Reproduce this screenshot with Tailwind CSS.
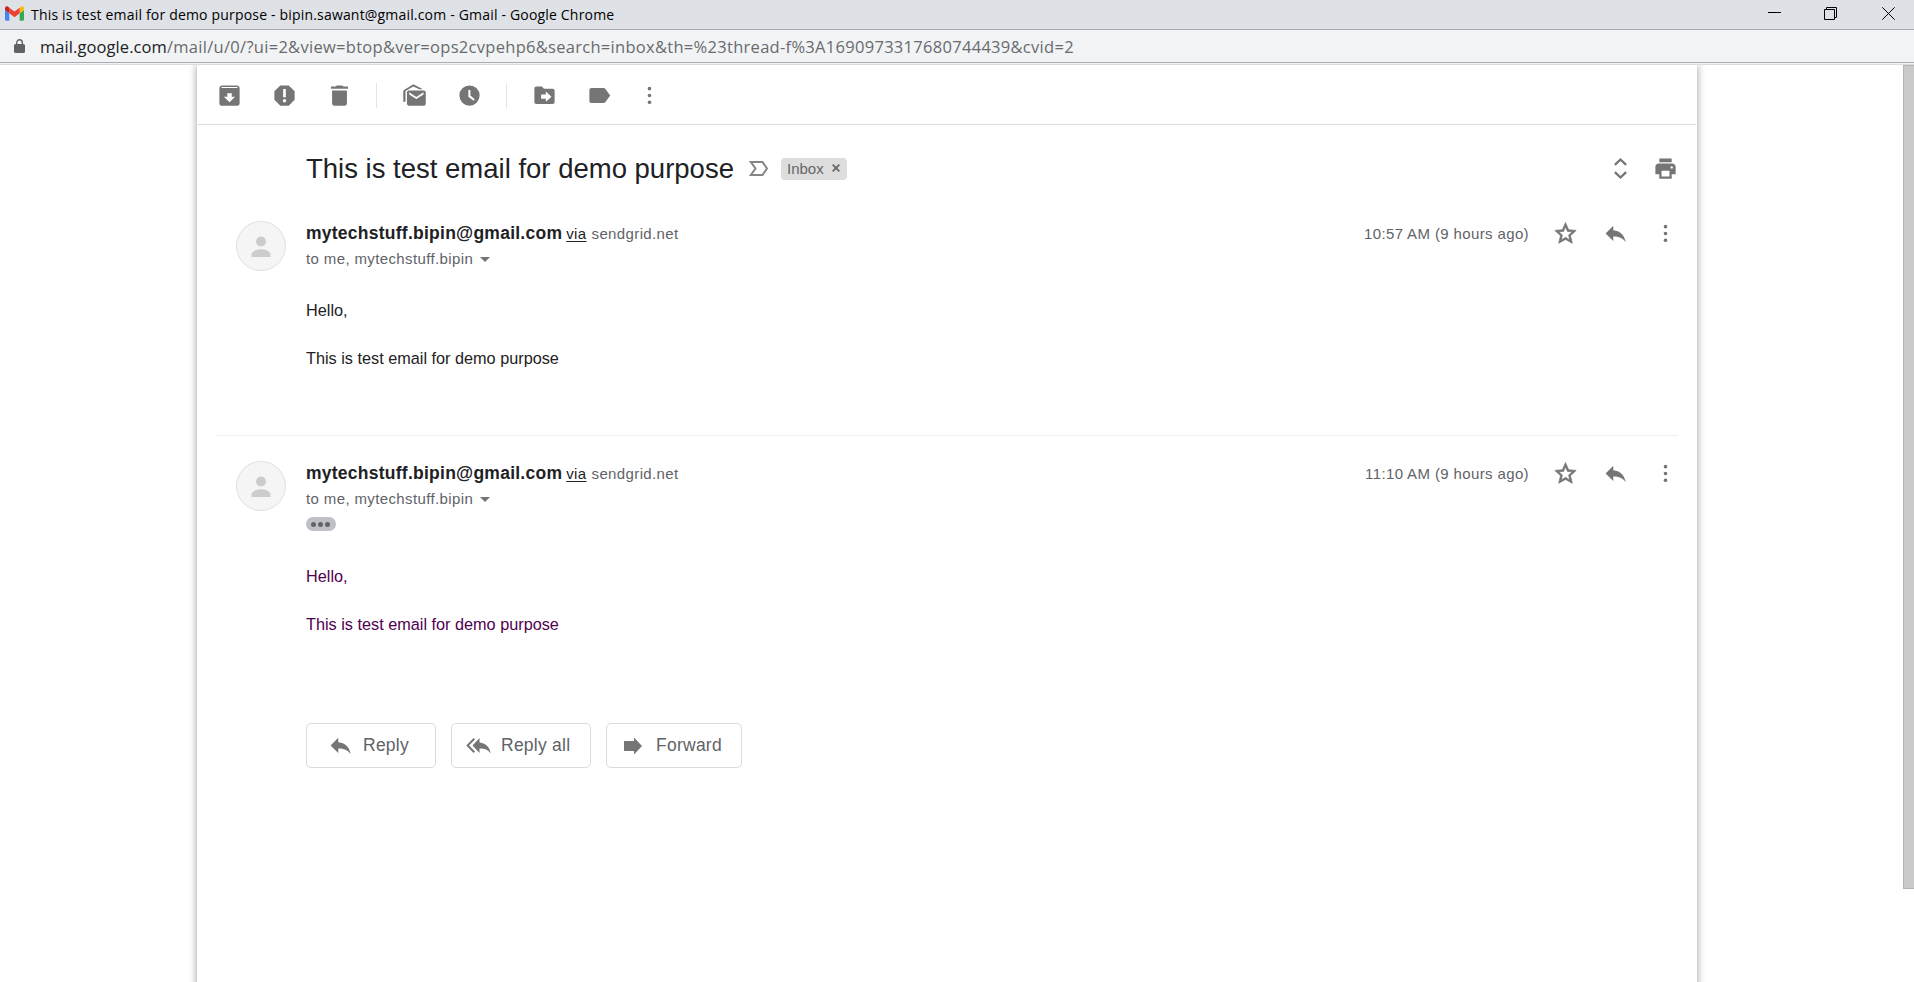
<!DOCTYPE html>
<html lang="en">
<head>
<meta charset="utf-8">
<title>This is test email for demo purpose - Gmail</title>
<script src="https://cdn.jsdelivr.net/npm/@tailwindcss/browser@4"></script>
</head>
<body class="h-[982px] w-[1914px] overflow-hidden bg-white flex flex-col font-['Liberation_Sans',Arial,sans-serif] text-[#202124]">

<svg class="hidden" aria-hidden="true">
  <symbol id="reply" viewBox="0 0 24 24"><path d="M10 9.200V5.200L3.200 12l6.800 6.600v-4c5 0 8.500 1.400 11 4.900-1-5-4-9.800-11-10.300z"/></symbol>
  <symbol id="more" viewBox="0 0 24 24"><circle cx="12" cy="5.900" r="1.600"/><circle cx="12" cy="12" r="1.600"/><circle cx="12" cy="18.100" r="1.600"/></symbol>
  <symbol id="star" viewBox="0 0 24 24"><path stroke="currentColor" stroke-width=".6" d="M21.500 9.240l-6.690-.62L12 2.300 9.190 8.630 2.500 9.240l5.060 4.730L5.920 20.700 12 17.270 18.080 20.700l-1.630-6.730L21.500 9.240zM12 15.400l-3.760 2.270 1-4.280-3.320-2.880 4.380-.38L12 6.100l1.710 4.040 4.380.38-3.320 2.880 1 4.280L12 15.400z"/></symbol>
  <symbol id="person" viewBox="0 0 50 50"><circle cx="25" cy="20.500" r="5"/><path d="M15.500 36v-2.500c0-3.500 6-5.200 9.500-5.200s9.500 1.700 9.500 5.200V36z"/></symbol>
</svg>

<header class="h-[30px] shrink-0 bg-[#dee1e6] border-b border-[#a9abae] flex items-center justify-between pl-[5px] pr-[19px]">
  <div class="flex items-center gap-[7px]">
    <svg class="w-[19px] h-[15px] mb-[2px]" viewBox="52 42 88 66"><path fill="#4285f4" d="M58 108h14V74L52 59v43c0 3.320 2.690 6 6 6"/><path fill="#34a853" d="M120 108h14c3.320 0 6-2.690 6-6V59l-20 15"/><path fill="#fbbc04" d="M120 48v26l20-15v-8c0-7.420-8.470-11.650-14.400-7.200"/><path fill="#ea4335" d="M72 74V48l24 18 24-18v26L96 92"/><path fill="#c5221f" d="M52 51v8l20 15V48l-5.600-4.200c-5.940-4.450-14.400-.22-14.400 7.200"/></svg>
    <span class="text-[14px] leading-[28px] tracking-[0.183px] text-black whitespace-nowrap font-['Open_Sans','Noto_Sans',sans-serif]">This is test email for demo purpose - bipin.sawant@gmail.com - Gmail - Google Chrome</span>
  </div>
  <div class="flex items-center gap-[43px] mb-[2px]">
    <svg class="w-[13px] h-[13px]" viewBox="0 0 13 13"><path d="M0 5.500h13" stroke="#000"/></svg>
    <svg class="w-[13px] h-[13px]" viewBox="0 0 13 13" fill="none" stroke="#000"><path d="M.5 2.500h10v10H.5zM2.500 2.500v-2h10v10h-2"/></svg>
    <svg class="w-[13px] h-[13px] ml-[2px]" viewBox="0 0 13 13"><path d="M.3.3l12.400 12.400M12.700.3L.3 12.700" stroke="#000"/></svg>
  </div>
</header>

<div class="h-[33px] shrink-0 bg-[#f1f3f4] border-b border-[#a9adb1] flex items-center gap-[15px] pl-[14px]">
  <svg class="w-[11px] h-[14px]" viewBox="0 0 11 14"><path fill="#5f6368" d="M1.500 5h8A1.500 1.500 0 0 1 11 6.500v6A1.500 1.500 0 0 1 9.500 14h-8A1.500 1.500 0 0 1 0 12.500v-6A1.500 1.500 0 0 1 1.500 5z"/><path d="M2.700 5.500V3.600a2.800 2.800 0 0 1 5.600 0v1.900" fill="none" stroke="#5f6368" stroke-width="1.400"/></svg>
  <span class="text-[16.500px] leading-[30px] tracking-[0.290px] pt-px whitespace-nowrap text-[#686b6f] font-['Open_Sans','Noto_Sans',sans-serif]"><span class="text-[#202124] tracking-[0.080px]">mail.google.com</span>/mail/u/0/?ui=2&amp;view=btop&amp;ver=ops2cvpehp6&amp;search=inbox&amp;th=%23thread-f%3A1690973317680744439&amp;cvid=2</span>
</div>
<div class="h-[2px] shrink-0 bg-[#f1f3f4] border-b border-[#dadce0]"></div>

<div class="flex-1 min-h-0 flex overflow-hidden">
  <main class="ml-[197px] w-[1500px] h-[940px] shrink-0 bg-white shadow-[0_0_8px_rgba(0,0,0,0.4)] px-px">
    <nav class="h-[60px] border-b border-[#dadfe4] flex items-center text-[#757575] pl-[18px] pt-[2px]">
      <div class="flex items-center gap-[28px]">
        <svg class="w-[27px] h-[27px]" viewBox="0 0 24 24" fill="currentColor"><path d="M5.200 3h13.600c.5 0 1 .3 1.400.7.500.4.800 1 .8 1.600V19a2 2 0 0 1-2 2H5a2 2 0 0 1-2-2V5.300c0-.6.300-1.200.8-1.600.4-.4.900-.7 1.400-.7zM5.200 4.500l-.7.800h15l-.7-.8zM10 10v3H7l5 5 5-5h-3v-3z" fill-rule="evenodd"/></svg>
        <svg class="w-[27px] h-[27px]" viewBox="0 0 24 24" fill="currentColor"><path fill-rule="evenodd" d="M15.730 3H8.270L3 8.270v7.460L8.270 21h7.460L21 15.730V8.270L15.730 3zM12 18.200a1.500 1.500 0 1 1 0-3 1.500 1.500 0 0 1 0 3zm1.200-4.700h-2.400V6.300h2.400z"/></svg>
        <svg class="w-[27px] h-[27px]" viewBox="0 0 24 24" fill="currentColor"><path d="M5.400 19c0 1.100.9 2 2 2h9.200c1.100 0 2-.9 2-2V7.500H5.400zM19.600 4h-4.100l-1-1h-5l-1 1H4.400v2h15.200z"/></svg>
      </div>
      <div class="w-px h-[25px] bg-[#e2e4e6] ml-[23px] mr-[24px]"></div>
      <div class="flex items-center gap-[28px]">
        <svg class="w-[27px] h-[27px]" viewBox="0 0 24 24" fill="currentColor"><path d="M4 17.500H2V8.500c0-.7.400-1.400 1-1.700L11 2l8.500 4.500h-3.300L11 4.100 4 7.900z"/><path fill-rule="evenodd" d="M7 7.500h13.300c1 0 1.700.8 1.700 1.700v10.100c0 1-.8 1.700-1.700 1.700H7c-1 0-1.700-.8-1.700-1.700V9.200c0-1 .8-1.700 1.700-1.700zM7.300 9.200v1.800l6.300 4.100 6.400-4.100V9.200l-6.400 4.100z"/></svg>
        <svg class="w-[27px] h-[27px]" viewBox="0 0 24 24" fill="currentColor"><path fill-rule="evenodd" d="M12 3a9 9 0 1 0 0 18 9 9 0 0 0 0-18zM11 7h1.800v5l3.900 3.300-1.100 1.400L11 13z"/></svg>
      </div>
      <div class="w-px h-[25px] bg-[#e2e4e6] ml-[23px] mr-[24px]"></div>
      <div class="flex items-center gap-[28px]">
        <svg class="w-[27px] h-[27px]" viewBox="0 0 24 24" fill="currentColor"><path fill-rule="evenodd" d="M4.800 4h4.800l2 2h7.600c1 0 1.800.8 1.800 1.800v9.900c0 1-.8 1.800-1.800 1.800H4.800c-1 0-1.800-.8-1.800-1.800V5.800C3 4.800 3.800 4 4.800 4zM13.200 8.500v2.700H9v3.600h4.200v2.700l5-4.500z"/></svg>
        <svg class="w-[27px] h-[27px]" viewBox="0 0 24 24" fill="currentColor"><path d="M17.300 6.200c-.4-.5-1-.8-1.600-.8H4.800C3.800 5.400 3 6.200 3 7.200v9.600c0 1 .8 1.800 1.800 1.800h10.900c.6 0 1.200-.3 1.600-.8L21.500 12z"/></svg>
        <svg class="w-[27px] h-[27px] -ml-[5px]" fill="currentColor"><use href="#more"/></svg>
      </div>
    </nav>

    <section class="h-[96px] pl-[108px] pr-[17px] pt-[28px] flex justify-between items-start">
      <div class="flex items-center h-[32px]">
        <h1 class="text-[27.500px] leading-[32px] whitespace-nowrap">This is test email for demo purpose</h1>
        <svg class="w-[19px] h-[15px] ml-[15px] mb-px" viewBox="0 0 19 15" fill="none" stroke="#858585" stroke-width="2"><path d="M1.800 1h11.700l4.500 6.500-4.500 6.500H1.800l4.700-6.500z"/></svg>
        <div class="ml-[13px] h-[22px] w-[66px] bg-[#ddd] rounded-[4px] flex items-center pl-[6px] text-[#666]">
          <span class="text-[15px] leading-[22px] w-[44px]">Inbox</span>
          <svg class="w-[8px] h-[8px] ml-[1px] mb-[2px]" viewBox="0 0 8 8"><path d="M.7.7l6.600 6.600M7.300.7L.7 7.300" stroke="#666" stroke-width="1.800"/></svg>
        </div>
      </div>
      <div class="flex items-center gap-[18px] h-[31px] text-[#757575]">
        <svg class="w-[27px] h-[27px]" viewBox="0 0 24 24" fill="none" stroke="currentColor" stroke-width="2.100"><path d="M7 8.700l5-4.700 5 4.700M7 15.300l5 4.700 5-4.700"/></svg>
        <svg class="w-[27px] h-[27px]" viewBox="0 0 24 24" fill="currentColor"><path fill-rule="evenodd" d="M6.500 3h11v3.500h-11zM6 7.500h12c1.700 0 3 1.300 3 3V17h-3.500v4h-11v-4H3v-6.500c0-1.700 1.300-3 3-3zM8.500 14v5h7v-5zM17.500 9.900a1.100 1.100 0 1 0 0 2.200 1.100 1.100 0 0 0 0-2.200z"/></svg>
      </div>
    </section>

    <article class="mx-[18px] h-[215px] border-b border-[#eceeef] pl-[20px] flex items-start">
      <div class="w-[50px] h-[50px] rounded-full bg-[#f5f5f5] border border-[#e0e0e0] mr-[20px] shrink-0"><svg class="w-[50px] h-[50px] -m-px fill-[#ccc]"><use href="#person"/></svg></div>
      <div class="flex-1">
        <div class="h-[24px] flex items-baseline leading-[24px]">
          <span class="text-[17.500px] font-bold tracking-[0.250px]">mytechstuff.bipin@gmail.com</span>
          <span class="text-[15px] tracking-[0.375px] underline underline-offset-2 ml-[4px]">via</span>
          <span class="text-[15px] tracking-[0.375px] text-[#5f6368] ml-[5px]">sendgrid.net</span>
        </div>
        <div class="mt-[2px] h-[24px] flex items-center text-[15px] leading-[24px] tracking-[0.375px] text-[#5f6368]">
          <span>to me, mytechstuff.bipin</span>
          <svg class="w-[10px] h-[5px] ml-[7px]" viewBox="0 0 10 5"><path d="M0 0h10L5 5z" fill="#757575"/></svg>
        </div>
        <div class="mt-[27px] text-[16.250px] leading-[24px] text-[#222]">Hello,<br><br>This is test email for demo purpose</div>
      </div>
      <div class="flex items-center h-[25px] -mr-px text-[#757575]">
        <span class="text-[15px] leading-[24px] tracking-[0.375px] text-[#5f6368] mr-[23px]">10:57 AM (9 hours ago)</span>
        <div class="flex gap-[23px]">
          <svg class="w-[27px] h-[27px]" fill="currentColor"><use href="#star"/></svg>
          <svg class="w-[27px] h-[27px]" fill="currentColor"><use href="#reply"/></svg>
          <svg class="w-[27px] h-[27px]" fill="currentColor"><use href="#more"/></svg>
        </div>
      </div>
    </article>

    <article class="mx-[18px] h-[287px] pt-[25px] pl-[20px] flex items-start">
      <div class="w-[50px] h-[50px] rounded-full bg-[#f5f5f5] border border-[#e0e0e0] mr-[20px] shrink-0"><svg class="w-[50px] h-[50px] -m-px fill-[#ccc]"><use href="#person"/></svg></div>
      <div class="flex-1">
        <div class="h-[24px] flex items-baseline leading-[24px]">
          <span class="text-[17.500px] font-bold tracking-[0.250px]">mytechstuff.bipin@gmail.com</span>
          <span class="text-[15px] tracking-[0.375px] underline underline-offset-2 ml-[4px]">via</span>
          <span class="text-[15px] tracking-[0.375px] text-[#5f6368] ml-[5px]">sendgrid.net</span>
        </div>
        <div class="mt-[2px] h-[24px] flex items-center text-[15px] leading-[24px] tracking-[0.375px] text-[#5f6368]">
          <span>to me, mytechstuff.bipin</span>
          <svg class="w-[10px] h-[5px] ml-[7px]" viewBox="0 0 10 5"><path d="M0 0h10L5 5z" fill="#757575"/></svg>
        </div>
        <div class="mt-[6px] w-[30px] h-[14px] rounded-full bg-[#bdc1c6] flex items-center justify-center gap-[2px] pr-px">
          <i class="w-[5px] h-[5px] rounded-full bg-[#5f6368]"></i><i class="w-[5px] h-[5px] rounded-full bg-[#5f6368]"></i><i class="w-[5px] h-[5px] rounded-full bg-[#5f6368]"></i>
        </div>
        <div class="mt-[33px] text-[16.250px] leading-[24px] text-[#500050]">Hello,<br><br>This is test email for demo purpose</div>
      </div>
      <div class="flex items-center h-[25px] -mr-px text-[#757575]">
        <span class="text-[15px] leading-[24px] tracking-[0.375px] text-[#5f6368] mr-[23px]">11:10 AM (9 hours ago)</span>
        <div class="flex gap-[23px]">
          <svg class="w-[27px] h-[27px]" fill="currentColor"><use href="#star"/></svg>
          <svg class="w-[27px] h-[27px]" fill="currentColor"><use href="#reply"/></svg>
          <svg class="w-[27px] h-[27px]" fill="currentColor"><use href="#more"/></svg>
        </div>
      </div>
    </article>

    <div class="pl-[108px] flex gap-[15px] text-[17.500px] leading-[43px] tracking-[0.250px] text-[#5f6368]">
      <button class="w-[130px] h-[45px] border border-[#dadce0] rounded-[5px] flex items-center pl-[20px]"><svg class="w-[27px] h-[27px] mr-[9px] fill-[#757575]"><use href="#reply"/></svg><span>Reply</span></button>
      <button class="w-[140px] h-[45px] border border-[#dadce0] rounded-[5px] flex items-center pl-[14px]"><svg class="w-[25px] h-[27px] mr-[10px]" viewBox="0 0 25 27"><path fill="#757575" d="M13.500 10.500V6L6.500 13.500l7 7.500v-4.400c5 0 8.500 1.200 11.300 5-1-5.500-4.300-10.600-11.300-11.100z"/><path d="M8.300 6.700L1.600 13.500l6.700 6.800" fill="none" stroke="#757575" stroke-width="2"/></svg><span>Reply all</span></button>
      <button class="w-[136px] h-[45px] border border-[#dadce0] rounded-[5px] flex items-center pl-[17px]"><svg class="w-[18px] h-[18px] mr-[14px]" viewBox="0 0 18 18"><path fill="#757575" d="M0 4h10V.5L18 9l-8 8.500V14H0z"/></svg><span>Forward</span></button>
    </div>
  </main>
  <div class="ml-auto w-[11px] h-[824px] bg-[#cacaca] border-t border-l border-b border-[#b4b4b4]"></div>
</div>
</body>
</html>
